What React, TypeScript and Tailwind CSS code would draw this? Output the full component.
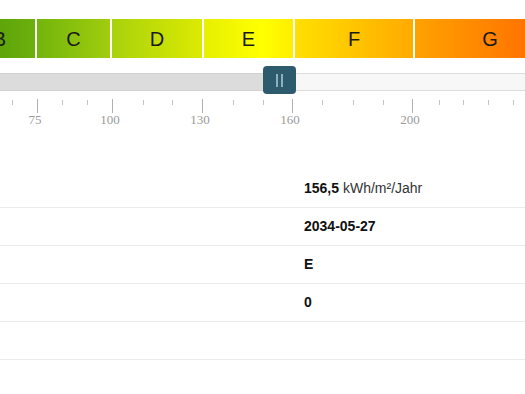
import React from 'react';

const segments = [
  { label: 'B', w: 'w-[71px]', bg: 'bg-[linear-gradient(to_right,#4f9a08,#6cb00c)]' },
  { label: 'C', w: 'w-[73px]', bg: 'bg-[linear-gradient(to_right,#72b50c,#a0cd0e)]' },
  { label: 'D', w: 'w-[90px]', bg: 'bg-[linear-gradient(to_right,#a8d20c,#dcea02)]' },
  { label: 'E', w: 'w-[89px]', bg: 'bg-[linear-gradient(to_right,#e6f002,#ffff00_65%,#ffee00)]' },
  { label: 'F', w: 'w-[118px]', bg: 'bg-[linear-gradient(to_right,#ffe000,#ffaa00)]' },
  { label: 'G', w: 'w-[150px]', bg: 'bg-[linear-gradient(to_right,#ffa200,#ff6400)]' },
];

const minorTicks = [12, 62, 87, 143, 172, 233, 263, 322, 353, 383, 439, 463, 488, 513];
const majorTicks = [
  { x: 37, label: '75' },
  { x: 112, label: '100' },
  { x: 202, label: '130' },
  { x: 292, label: '160' },
  { x: 412, label: '200' },
];

const rows: React.ReactNode[] = [
  <>
    <span className="font-bold text-[#111]">156,5</span>{' '}
    <span className="text-[#333]">kWh/m²/Jahr</span>
  </>,
  <span className="font-bold text-[#111]">2034-05-27</span>,
  <span className="font-bold text-[#111]">E</span>,
  <span className="font-bold text-[#111]">0</span>,
  null,
];

export default function App() {
  return (
    <div className="w-[525px] h-[394px] bg-white overflow-hidden font-['Liberation_Sans',Arial,sans-serif]">
      {/* energy class bar */}
      <div className="pt-[19px] overflow-hidden">
        <div className="flex gap-[2px] -ml-[36px] w-max h-[39px]">
          {segments.map(s => (
            <div
              key={s.label}
              className={`${s.w} ${s.bg} shrink-0 flex items-center justify-center text-[20px] text-[#1a1a1a]`}
            >
              {s.label}
            </div>
          ))}
        </div>
      </div>

      {/* range slider */}
      <div className="relative mt-[8px] h-[33px]">
        <div className="absolute left-0 right-0 top-[7px] h-[18px] flex">
          <div className="w-[270px] bg-[#dcdcdc] border-y border-[#d2d2d2]" />
          <div className="flex-1 bg-[#f7f7f7] border-y border-[#dedede]" />
        </div>
        <div className="absolute left-[263px] top-0 w-[33px] h-[28px] rounded-[4px] bg-[#2d5a6c] flex items-center justify-center gap-[3px]">
          <span className="w-[2px] h-[13px] bg-[#8db0bf]" />
          <span className="w-[2px] h-[13px] bg-[#8db0bf]" />
        </div>
      </div>

      {/* grid */}
      <svg width="525" height="30" className="block">
        {minorTicks.map(x => (
          <line key={x} x1={x + 0.5} x2={x + 0.5} y1={1} y2={6} stroke="#c4c4c4" strokeWidth={1} />
        ))}
        {majorTicks.map(t => (
          <g key={t.x}>
            <line x1={t.x + 0.5} x2={t.x + 0.5} y1={0} y2={14} stroke="#b0b0b0" strokeWidth={1} />
            <text
              x={t.x - 2}
              y={25}
              textAnchor="middle"
              fontSize="13"
              fill="#9a9a9a"
              fontFamily="'Liberation Serif', serif"
            >
              {t.label}
            </text>
          </g>
        ))}
      </svg>

      {/* detail rows */}
      <div className="mt-[41px]">
        {rows.map((r, i) => (
          <div key={i} className="grid grid-cols-[304px_1fr] h-[38px] items-center border-b border-[#ebebeb] text-[14px]">
            <div />
            <div>{r}</div>
          </div>
        ))}
      </div>
    </div>
  );
}
